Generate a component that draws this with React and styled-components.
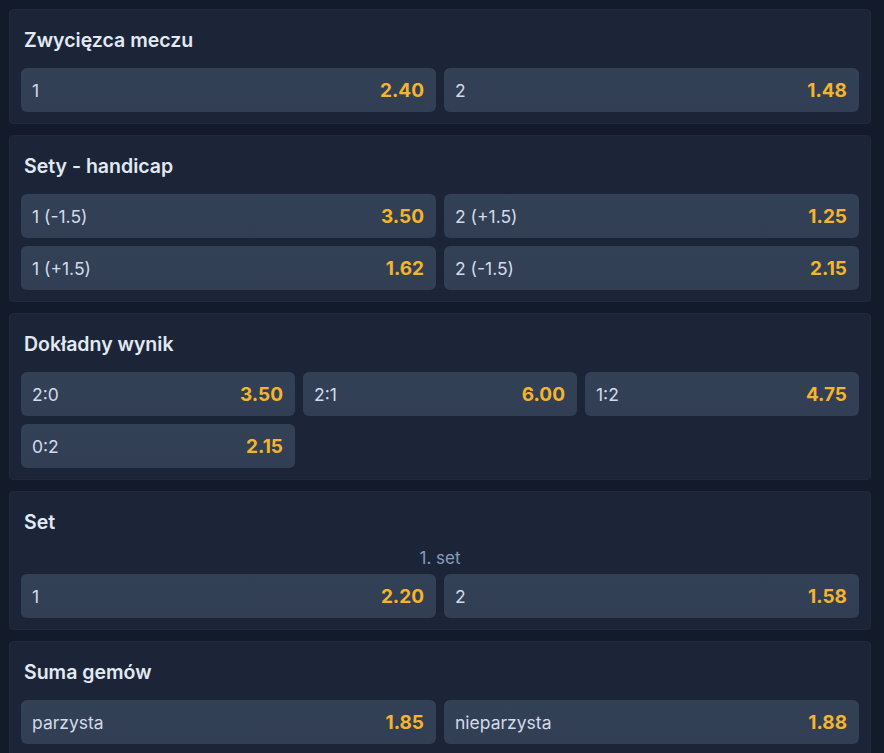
import React from 'react';
import styled, { createGlobalStyle } from 'styled-components';

const GlobalStyle = createGlobalStyle`
  html, body {
    margin: 0;
    background: #131b2b;
  }
  body {
    font-family: Inter, 'Noto Sans', sans-serif;
  }
`;

const Page = styled.div`
  display: flex;
  flex-direction: column;
  gap: 11px;
  padding: 9px 13px 9px 9px;
`;

const Card = styled.section`
  background: #1b2537;
  border: 1px solid #1f2a3d;
  border-radius: 4px;
  padding: 11px;
`;

const Title = styled.h2`
  margin: 0 0 ${(props) => (props.hasSub ? 0 : 9)}px;
  padding: 7px 3px;
  font-size: 19.5px;
  line-height: 24px;
  font-weight: 600;
  color: #e3e9f3;
`;

const SubLabel = styled.div`
  margin: 8px 0 7px;
  text-align: center;
  font-size: 17px;
  line-height: 18px;
  color: #8a9cc0;
`;

const Grid = styled.div`
  display: grid;
  grid-template-columns: repeat(${(props) => props.cols}, 1fr);
  gap: 8px;
`;

const Odd = styled.button`
  display: flex;
  align-items: center;
  justify-content: space-between;
  height: 44px;
  padding: 0 12px 0 11px;
  border: none;
  border-radius: 6px;
  background: linear-gradient(180deg, #334157 0%, #313e53 100%);
  font-family: inherit;
  cursor: pointer;
`;

const Label = styled.span`
  font-size: 17.5px;
  color: #d3dbe8;
`;

const Price = styled.span`
  font-size: 19px;
  font-weight: 700;
  color: #f4b52c;
`;

const markets = [
  { title: 'Zwycięzca meczu', cols: 2, odds: [['1', '2.40'], ['2', '1.48']] },
  {
    title: 'Sety - handicap',
    cols: 2,
    odds: [['1 (-1.5)', '3.50'], ['2 (+1.5)', '1.25'], ['1 (+1.5)', '1.62'], ['2 (-1.5)', '2.15']]
  },
  {
    title: 'Dokładny wynik',
    cols: 3,
    odds: [['2:0', '3.50'], ['2:1', '6.00'], ['1:2', '4.75'], ['0:2', '2.15']]
  },
  { title: 'Set', sub: '1. set', cols: 2, odds: [['1', '2.20'], ['2', '1.58']] },
  { title: 'Suma gemów', cols: 2, odds: [['parzysta', '1.85'], ['nieparzysta', '1.88']] }
];

const App = () => (
  <>
    <GlobalStyle />
    <Page>
      {markets.map((m) => (
        <Card key={m.title}>
          <Title hasSub={!!m.sub}>{m.title}</Title>
          {m.sub && <SubLabel>{m.sub}</SubLabel>}
          <Grid cols={m.cols}>
            {m.odds.map(([label, price], i) => (
              <Odd key={i}>
                <Label>{label}</Label>
                <Price>{price}</Price>
              </Odd>
            ))}
          </Grid>
        </Card>
      ))}
    </Page>
  </>
);

export default App;
